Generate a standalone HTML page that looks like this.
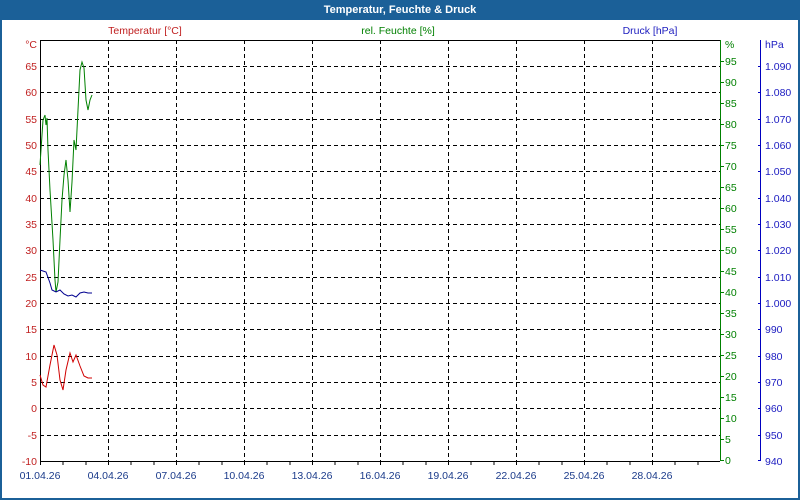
<!DOCTYPE html>
<html><head><meta charset="utf-8"><style>
html,body{margin:0;padding:0;background:#fff}
svg{display:block;font-family:"Liberation Sans",sans-serif;font-size:10.5px}
</style></head><body>
<svg width="800" height="500" viewBox="0 0 800 500" xmlns="http://www.w3.org/2000/svg">
<rect x="0" y="0" width="800" height="500" fill="#1b6098"/>
<rect x="2" y="20" width="796" height="478" fill="#fff"/>
<text x="400" y="13" fill="#fff" font-weight="bold" font-size="11" text-anchor="middle">Temperatur, Feuchte &amp; Druck</text>
<text x="145" y="34" fill="#c02020" text-anchor="middle">Temperatur [°C]</text>
<text x="398" y="34" fill="#008000" text-anchor="middle">rel. Feuchte [%]</text>
<text x="650" y="34" fill="#2020c0" text-anchor="middle">Druck [hPa]</text>
<g stroke="#000" stroke-dasharray="4,3" stroke-width="1">
<path d="M40 66.5H720M40 92.5H720M40 119.5H720M40 145.5H720M40 171.5H720M40 198.5H720M40 224.5H720M40 250.5H720M40 277.5H720M40 303.5H720M40 329.5H720M40 356.5H720M40 382.5H720M40 408.5H720M40 435.5H720"/>
<path d="M108.5 40V461M176.5 40V461M244.5 40V461M312.5 40V461M380.5 40V461M448.5 40V461M516.5 40V461M584.5 40V461M652.5 40V461"/>
</g>
<path d="M40.5 40V461.5H720M40 40.5H720" stroke="#000" fill="none"/>
<path d="M40.5 461v4M63 461v4M86 461v4M108.5 461v4M131 461v4M154 461v4M176.5 461v4M199 461v4M222 461v4M244.5 461v4M267 461v4M290 461v4M312.5 461v4M335 461v4M358 461v4M380.5 461v4M403 461v4M426 461v4M448.5 461v4M471 461v4M494 461v4M516.5 461v4M539 461v4M562 461v4M584.5 461v4M607 461v4M630 461v4M652.5 461v4M675 461v4M698 461v4" stroke="#000"/>
<g fill="#1a3a8a" text-anchor="middle">
<text x="40" y="479">01.04.26</text><text x="108" y="479">04.04.26</text><text x="176" y="479">07.04.26</text><text x="244" y="479">10.04.26</text><text x="312" y="479">13.04.26</text><text x="380" y="479">16.04.26</text><text x="448" y="479">19.04.26</text><text x="516" y="479">22.04.26</text><text x="584" y="479">25.04.26</text><text x="652" y="479">28.04.26</text>
</g>
<g fill="#c02020" text-anchor="end">
<text x="37" y="48">°C</text><text x="37" y="70">65</text><text x="37" y="96">60</text><text x="37" y="123">55</text><text x="37" y="149">50</text><text x="37" y="175">45</text><text x="37" y="202">40</text><text x="37" y="228">35</text><text x="37" y="254">30</text><text x="37" y="281">25</text><text x="37" y="307">20</text><text x="37" y="333">15</text><text x="37" y="360">10</text><text x="37" y="386">5</text><text x="37" y="412">0</text><text x="37" y="439">-5</text><text x="37" y="465">-10</text>
</g>
<path d="M720.5 40V461" stroke="#008000"/>
<path d="M760.5 40V461" stroke="#0000c0"/>
<g id="gt" stroke="#008000"></g>
<path d="M720 61.5h4M720 82.5h4M720 103.5h4M720 124.5h4M720 145.5h4M720 166.5h4M720 187.5h4M720 208.5h4M720 229.5h4M720 250.5h4M720 271.5h4M720 292.5h4M720 313.5h4M720 334.5h4M720 355.5h4M720 376.5h4M720 397.5h4M720 418.5h4M720 439.5h4M720 460.5h4" stroke="#008000"/>
<g fill="#008000">
<text x="725" y="48">%</text><text x="725" y="65">95</text><text x="725" y="86">90</text><text x="725" y="107">85</text><text x="725" y="128">80</text><text x="725" y="149">75</text><text x="725" y="170">70</text><text x="725" y="191">65</text><text x="725" y="212">60</text><text x="725" y="233">55</text><text x="725" y="254">50</text><text x="725" y="275">45</text><text x="725" y="296">40</text><text x="725" y="317">35</text><text x="725" y="338">30</text><text x="725" y="359">25</text><text x="725" y="380">20</text><text x="725" y="401">15</text><text x="725" y="422">10</text><text x="725" y="443">5</text><text x="725" y="464">0</text>
</g>
<path d="M758 66.5h3M758 92.5h3M758 119.5h3M758 145.5h3M758 171.5h3M758 198.5h3M758 224.5h3M758 250.5h3M758 277.5h3M758 303.5h3M758 329.5h3M758 356.5h3M758 382.5h3M758 408.5h3M758 435.5h3M758 460.5h3" stroke="#0000c0"/>
<g fill="#1a1ac0">
<text x="765" y="48">hPa</text><text x="765" y="70">1.090</text><text x="765" y="96">1.080</text><text x="765" y="123">1.070</text><text x="765" y="149">1.060</text><text x="765" y="175">1.050</text><text x="765" y="202">1.040</text><text x="765" y="228">1.030</text><text x="765" y="254">1.020</text><text x="765" y="281">1.010</text><text x="765" y="307">1.000</text><text x="765" y="333">990</text><text x="765" y="360">980</text><text x="765" y="386">970</text><text x="765" y="412">960</text><text x="765" y="439">950</text><text x="765" y="465">940</text>
</g>
<polyline fill="none" stroke="#008000" points="40,165 43,120 45,115 46,125 47,118 48,150 50,190 53,240 55,280 56,292 58,282 60,240 62,200 64,175 66,160 68,180 70,212 72,182 74,140 76,150 78,110 80,70 82,62 84,68 86,100 88,110 90,100 92,95"/>
<polyline fill="none" stroke="#d00000" points="40,375 43,385 46,387 50,365 54,345 57,355 60,380 63,390 66,370 70,353 73,362 76,355 80,366 84,376 88,378 92,378"/>
<polyline fill="none" stroke="#000090" points="40,270 46,272 50,283 52,290 56,292 60,290 64,294 68,296 72,295 76,297 80,293 84,292 88,293 92,293"/>
</svg>
</body></html>
